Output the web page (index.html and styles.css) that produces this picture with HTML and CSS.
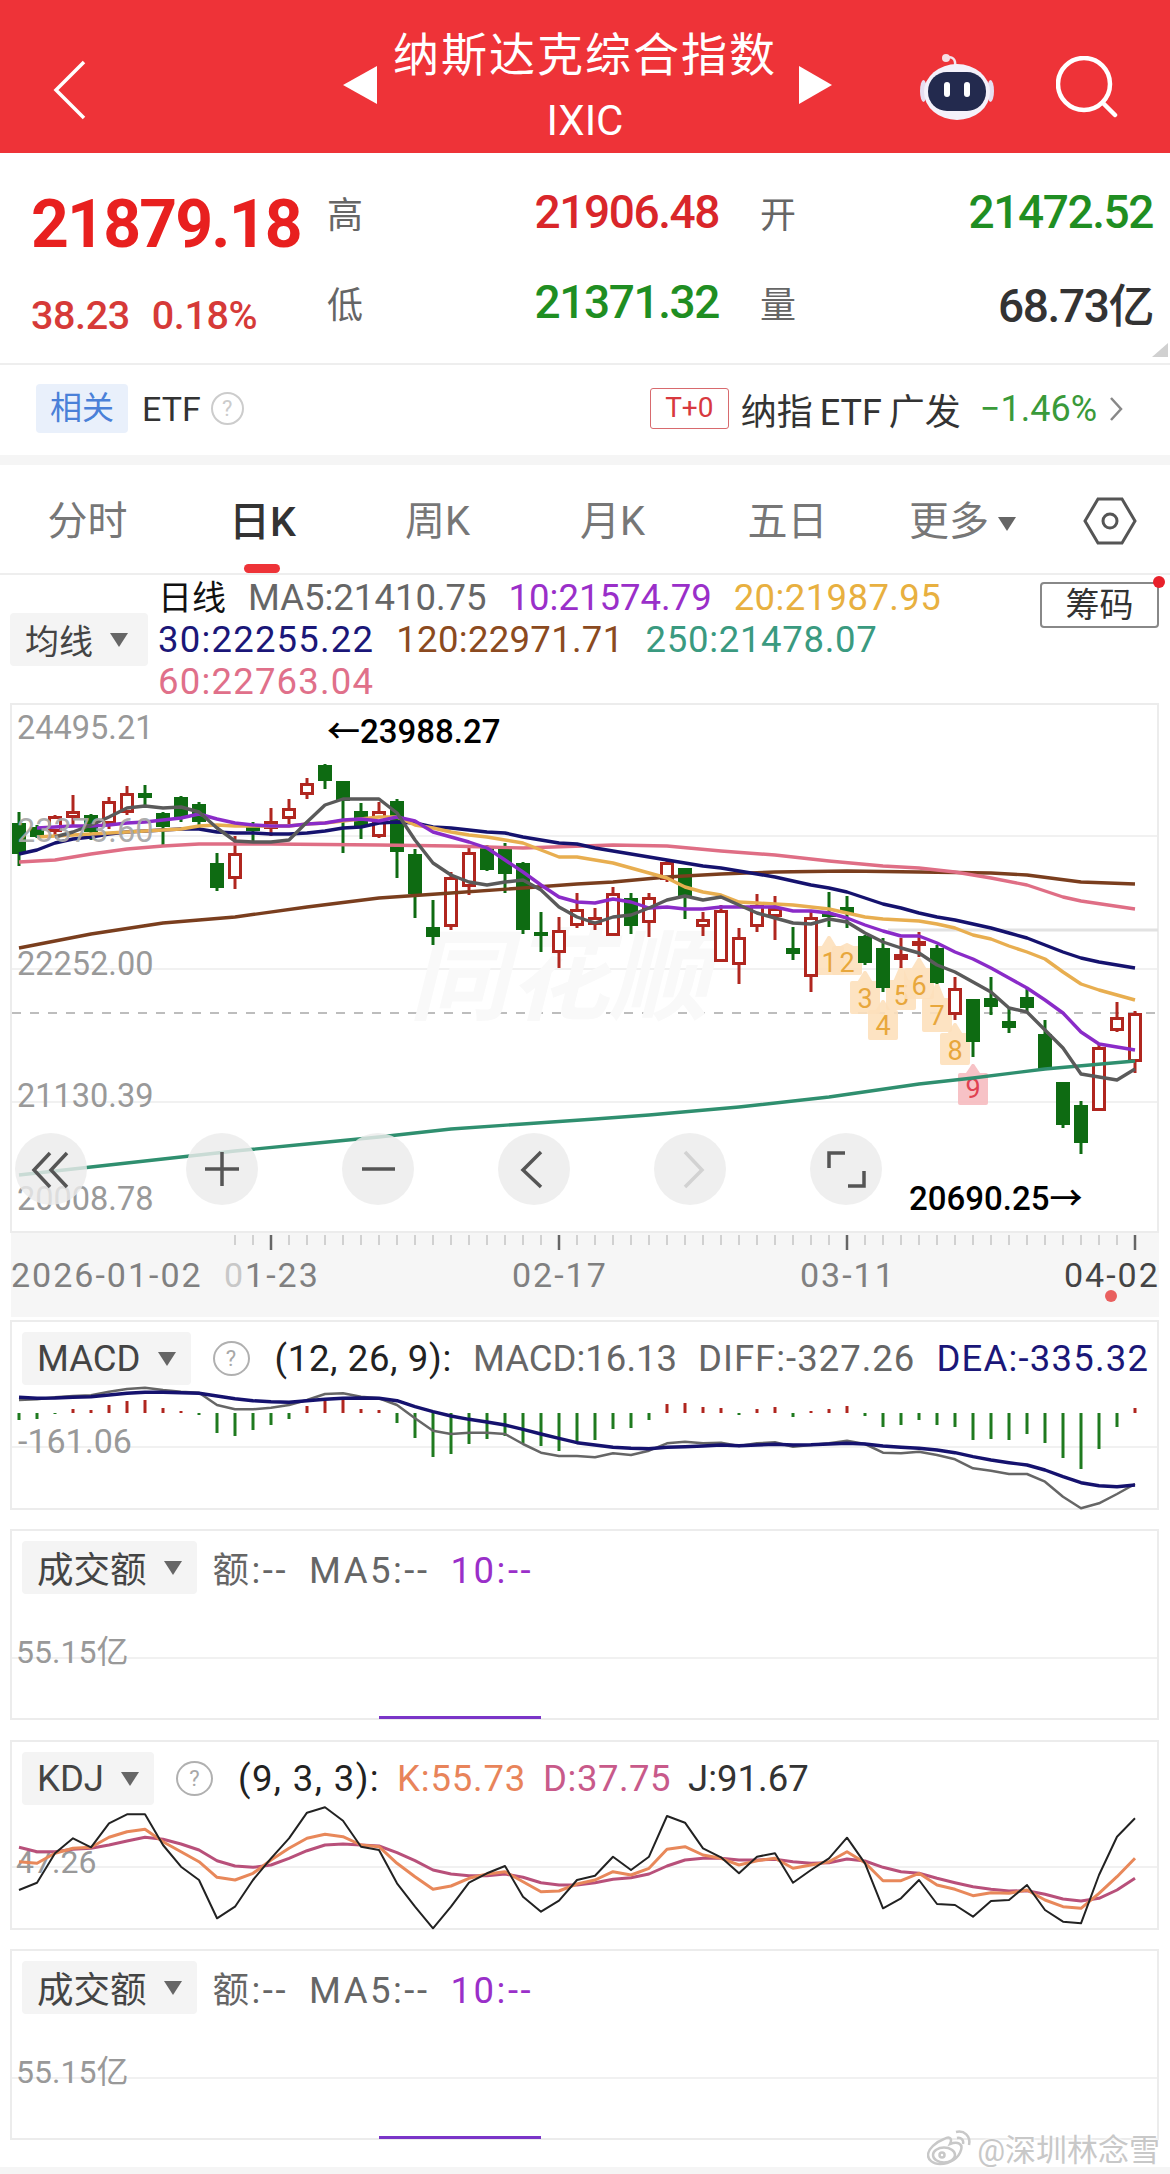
FILE: index.html
```html
<!DOCTYPE html>
<html lang="zh-CN">
<head>
    <meta charset="UTF-8">
    <meta name="viewport" content="width=device-width, initial-scale=1.0">
    <title>纳斯达克综合指数</title>
    <link rel="stylesheet" href="styles.css">
</head>
<body>

<header class="top">
    <div class="top-left">
        <svg width="34" height="60" viewBox="0 0 34 60"><path d="M31 2 L3 30 L31 58" class="back-icon"/></svg>
    </div>
    <div class="title-wrap">
        <span class="nav-arrow prev"></span>
        <div class="title">
            <div class="title-name">纳斯达克综合指数</div>
            <div class="title-code">IXIC</div>
        </div>
        <span class="nav-arrow next"></span>
    </div>
    <div class="top-right">
        <svg width="74" height="68" viewBox="0 0 74 68">
            <path d="M27 5 C32 3 36 6 35 13" fill="none" stroke="#f3e6ee" stroke-width="2.5"/>
            <circle cx="26" cy="5" r="4" fill="#f6dfe4"/>
            <ellipse cx="3.5" cy="38" rx="3.5" ry="11" fill="#e6def0"/>
            <ellipse cx="70.5" cy="38" rx="3.5" ry="11" fill="#e6def0"/>
            <ellipse cx="37" cy="39" rx="33" ry="28" fill="#f4f1fa"/>
            <rect x="8" y="19" width="58" height="39" rx="19" fill="#232a4e"/>
            <rect x="24" y="29" width="6" height="15" rx="3" fill="#fff"/>
            <rect x="44" y="29" width="6" height="15" rx="3" fill="#fff"/>
        </svg>
        <svg width="62" height="62" viewBox="0 0 62 62" class="search-icon">
            <circle cx="28" cy="28" r="26"/>
            <path d="M47 47 L59 59"/>
        </svg>
    </div>
</header>

<section class="quote">
    <div class="price">21879.18</div>
    <div class="q-label">高</div>
    <div class="q-value red">21906.48</div>
    <div class="q-label">开</div>
    <div class="q-value green">21472.52</div>
    <div class="change"><span>38.23</span><span>0.18%</span></div>
    <div class="q-label">低</div>
    <div class="q-value green">21371.32</div>
    <div class="q-label">量</div>
    <div class="q-value dark">68.73亿</div>
    <span class="corner"></span>
</section>

<section class="related">
    <div class="related-left">
        <span class="badge">相关</span>
        <span class="etf">ETF</span>
        <span class="help small">?</span>
    </div>
    <div class="related-right">
        <span class="t0">T+0</span>
        <span class="etf-name">纳指 ETF 广发</span>
        <span class="etf-pct">−1.46%</span>
        <svg width="14" height="26" viewBox="0 0 14 26"><path d="M2 2 L12 13 L2 24" class="row-arrow"/></svg>
    </div>
</section>

<div class="band"></div>

<nav class="tabs">
    <div class="tab">分时</div>
    <div class="tab active"><span>日K</span></div>
    <div class="tab">周K</div>
    <div class="tab">月K</div>
    <div class="tab">五日</div>
    <div class="tab">更多<i class="caret tab-caret"></i></div>
    <div class="tab">
        <svg width="54" height="48" viewBox="0 0 54 48" class="hex-icon">
            <path d="M2 24 L15 2 L39 2 L52 24 L39 46 L15 46 Z"/>
            <circle cx="27" cy="24" r="7"/>
        </svg>
    </div>
</nav>

<section class="ma-head">
    <div class="chip ma-chip">均线<i class="caret"></i></div>
    <div class="ma-lines">
        <div class="ma-line">
            <span class="ma-title">日线</span>
            <span class="c-ma5">MA5:21410.75</span>
            <span class="c-ma10">10:21574.79</span>
            <span class="c-ma20">20:21987.95</span>
        </div>
        <div class="ma-line">
            <span class="c-ma30">30:22255.22</span>
            <span class="c-ma120">120:22971.71</span>
            <span class="c-ma250">250:21478.07</span>
        </div>
        <div class="ma-line">
            <span class="c-ma60">60:22763.04</span>
        </div>
    </div>
    <div class="chips-btn">筹码</div>
</section>

<section class="main-chart">
    <svg class="chart-svg" viewBox="12 705 1146 526" width="1146" height="526">
        <g class="grid">
            <line x1="12" x2="1158" y1="836" y2="836"/>
            <line x1="12" x2="1158" y1="969" y2="969"/>
            <line x1="12" x2="1158" y1="1102" y2="1102"/>
        </g>
        <line x1="888" x2="1158" y1="930" y2="930" class="grid-thick"/>
        <line x1="12" x2="1158" y1="1013" y2="1013" class="grid-dash"/>
        <text x="409" y="1012" class="brand">同花顺</text>
        <g id="plot"></g>
        <g class="y-label">
            <text x="17" y="739">24495.21</text>
            <text x="17" y="842" class="soft">23373.60</text>
            <text x="17" y="975">22252.00</text>
            <text x="17" y="1107">21130.39</text>
            <text x="17" y="1210">20008.78</text>
        </g>
        <text x="327" y="743" class="extreme">←23988.27</text>
        <text x="909" y="1210" class="extreme">20690.25→</text>
    </svg>
    <div class="tools">
        <button class="tool first"><svg width="72" height="72" viewBox="0 0 72 72"><path d="M35 20 L19 37 L35 54 M52 20 L36 37 L52 54"/></svg></button>
        <button class="tool"><svg width="72" height="72" viewBox="0 0 72 72"><path d="M19 36 H53 M36 19 V53"/></svg></button>
        <button class="tool"><svg width="72" height="72" viewBox="0 0 72 72"><path d="M20 36 H53"/></svg></button>
        <button class="tool"><svg width="72" height="72" viewBox="0 0 72 72"><path d="M43 19 L25 37 L43 54"/></svg></button>
        <button class="tool off"><svg width="72" height="72" viewBox="0 0 72 72"><path d="M31 19 L48 37 L31 54"/></svg></button>
        <button class="tool"><svg width="72" height="72" viewBox="0 0 72 72"><path d="M19 35 V20 H35 M54 38 V53 H38"/></svg></button>
    </div>
</section>

<section class="axis">
    <svg class="axis-svg" viewBox="11 1233 1148 84" width="1148" height="84">
        <g id="ticks"></g>
        <g class="axis-label">
            <text x="11" y="1287">2026-01-02</text>
            <text x="224" y="1287"><tspan class="fade">0</tspan>1-23</text>
            <text x="512" y="1287">02-17</text>
            <text x="800" y="1287">03-11</text>
            <text x="1064" y="1287" class="last">04-02</text>
        </g>
        <circle cx="1111" cy="1296" r="6" fill="#e9605f"/>
    </svg>
</section>

<div class="panels">
    <section class="panel macd">
        <svg class="panel-svg" viewBox="10 1320 1149 190" width="1149" height="190">
            <line x1="12" x2="1157" y1="1447" y2="1447" class="grid"/>
            <g id="macd"></g>
            <text x="18" y="1453" class="panel-axis">-161.06</text>
        </svg>
        <div class="panel-head">
            <div class="chip">MACD<i class="caret"></i></div>
            <span class="help">?</span>
            <div class="ind">
                <span class="params sp-macd">(12, 26, 9):</span>
                <span class="c-ma5">MACD:16.13</span>
                <span class="c-ma5 sp-diff">DIFF:-327.26</span>
                <span class="c-ma30 sp-dea">DEA:-335.32</span>
            </div>
        </div>
    </section>

    <section class="panel vol">
        <svg class="panel-svg" viewBox="10 1529 1149 191" width="1149" height="191">
            <line x1="12" x2="1157" y1="1658" y2="1658" class="grid"/>
            <rect x="379" y="1716" width="162" height="3" class="vol-bar"/>
            <text x="16" y="1663" class="panel-axis small">55.15亿</text>
        </svg>
        <div class="panel-head">
            <div class="chip">成交额<i class="caret"></i></div>
            <div class="ind">
                <span class="c-ma5">额:--</span>
                <span class="c-ma5">MA5:--</span>
                <span class="c-ma10">10:--</span>
            </div>
        </div>
    </section>

    <section class="panel kdj">
        <svg class="panel-svg" viewBox="10 1740 1149 190" width="1149" height="190">
            <line x1="12" x2="1157" y1="1867" y2="1867" class="grid"/>
            <text x="16" y="1873" class="panel-axis small">47.26</text>
            <g id="kdj"></g>
        </svg>
        <div class="panel-head">
            <div class="chip">KDJ<i class="caret"></i></div>
            <span class="help">?</span>
            <div class="ind ind-kdj">
                <span class="params sp-kdj">(9, 3, 3):</span>
                <span class="c-k">K:55.73</span>
                <span class="c-d">D:37.75</span>
                <span class="c-j">J:91.67</span>
            </div>
        </div>
    </section>

    <section class="panel vol">
        <svg class="panel-svg" viewBox="10 1949 1149 191" width="1149" height="191">
            <line x1="12" x2="1157" y1="2078" y2="2078" class="grid"/>
            <rect x="379" y="2136" width="162" height="3" class="vol-bar"/>
            <text x="16" y="2083" class="panel-axis small">55.15亿</text>
        </svg>
        <div class="panel-head">
            <div class="chip">成交额<i class="caret"></i></div>
            <div class="ind">
                <span class="c-ma5">额:--</span>
                <span class="c-ma5">MA5:--</span>
                <span class="c-ma10">10:--</span>
            </div>
        </div>
    </section>
</div>

<div class="foot"></div>

<div class="stamp">
    <svg width="46" height="38" viewBox="0 0 46 38" class="stamp-logo">
        <path d="M17 10 C24 6 25 11 23 15 C31 12 36 15 34 21 C32 29 23 35 13 35 C6 35 1 31 1 26 C1 20 9 13 17 10 Z"/>
        <ellipse cx="17" cy="26" rx="11" ry="7.5"/>
        <circle cx="15" cy="26" r="2.5"/>
        <path d="M30 9 C34 8 37 11 36 15 M29 3 C37 1 44 7 42 16"/>
    </svg>
    <span>@深圳林念雪</span>
</div>

<script src="chart.js"></script>

</body>
</html>
```

FILE: styles.css
```css
* {
    box-sizing: border-box;
}
body {
    font-family: Roboto, "Noto Sans CJK SC", sans-serif;
    background-color: #fff;
    margin: 0;
    padding: 0;
    position: relative;
    color: #333;
}

/* top red bar */
.top {
    height: 153px;
    background-color: #ee3338;
    display: grid;
    grid-template-columns: 1fr auto 1fr;
    color: #fff;
}
.top-left {
    padding: 27px 0 0 53px;
    display: flex;
    align-items: center;
}
.back-icon {
    fill: none;
    stroke: #fff;
    stroke-width: 3.5;
}
.title-wrap {
    display: flex;
    align-items: center;
    padding-left: 5px;
}
.nav-arrow {
    width: 0;
    height: 0;
    margin-top: 16px;
    border-top: 19px solid transparent;
    border-bottom: 19px solid transparent;
}
.nav-arrow.prev {
    border-right: 34px solid #fff;
    margin-right: 16px;
}
.nav-arrow.next {
    border-left: 33px solid #fff;
    margin-left: 22px;
}
.title {
    text-align: center;
    padding-top: 22px;
}
.title-name {
    font-size: 46px;
    line-height: 66px;
    letter-spacing: 2px;
}
.title-code {
    font-size: 42px;
    line-height: 65px;
}
.top-right {
    padding: 20px 52px 0 0;
    display: flex;
    align-items: center;
    justify-content: flex-end;
    gap: 62px;
}
.search-icon {
    fill: none;
    stroke: #fff;
    stroke-width: 4.5;
}
.search-icon path {
    stroke-linecap: round;
}

/* quote block */
.quote {
    height: 212px;
    padding: 14px 17px 0 31px;
    display: grid;
    grid-template-columns: 296px 36px 356px 41px 36px 357px;
    grid-template-rows: 90px 90px;
    align-items: center;
    position: relative;
    border-bottom: 2px solid #eee;
}
.price {
    font-size: 66px;
    font-weight: 700;
    color: #e8201f;
    letter-spacing: -1.8px;
    margin-top: 24px;
}
.q-label {
    font-size: 36px;
    color: #666;
}
.q-value {
    font-size: 46px;
    font-weight: 500;
    text-align: right;
    letter-spacing: -1.4px;
}
.q-value.red { color: #d9262a; }
.q-value.green { color: #1f8e22; }
.q-value.dark { color: #333; }
.q-label + .q-value + .q-label {
    grid-column: 5;
}
.change {
    display: flex;
    gap: 22px;
    font-size: 39.5px;
    font-weight: 500;
    letter-spacing: -0.4px;
    color: #d63a38;
    margin-top: 26px;
}
.corner {
    position: absolute;
    right: 2px;
    bottom: 6px;
    width: 0;
    height: 0;
    border-left: 16px solid transparent;
    border-bottom: 14px solid #d0d0d0;
}

/* related etf row */
.related {
    height: 90px;
    padding: 0 47px 3px 36px;
    display: flex;
    justify-content: space-between;
    align-items: center;
}
.related-left, .related-right {
    display: flex;
    align-items: center;
}
.badge {
    width: 92px;
    height: 49px;
    background-color: #e9f0fb;
    border-radius: 4px;
    color: #4a80d8;
    font-size: 32px;
    line-height: 49px;
    text-align: center;
}
.etf {
    font-size: 34px;
    margin-left: 14px;
}
.help {
    display: flex;
    align-items: center;
    justify-content: center;
    width: 37px;
    height: 35px;
    flex: none;
    border: 2px solid #b0b0b0;
    border-radius: 50%;
    font-size: 22px;
    color: #a8a8a8;
    margin-left: 22px;
}
.help.small {
    width: 33px;
    height: 33px;
    margin-left: 10px;
    border-color: #ccc;
    color: #ccc;
}
.t0 {
    width: 79px;
    height: 41px;
    border: 1.5px solid #d86a6e;
    border-radius: 3px;
    color: #d8393f;
    font-size: 28px;
    line-height: 38px;
    text-align: center;
}
.etf-name {
    font-size: 36px;
    word-spacing: -2px;
    margin-left: 12px;
}
.etf-pct {
    font-size: 36px;
    color: #3a9a3a;
    margin-left: 19px;
}
.row-arrow {
    fill: none;
    stroke: #888;
    stroke-width: 2.5;
}
.related-right svg {
    margin-left: 12px;
}
.band {
    height: 10px;
    background-color: #f5f5f5;
}

/* period tabs */
.tabs {
    height: 110px;
    padding-top: 6px;
    display: grid;
    grid-template-columns: repeat(6, 175px) 120px;
    align-items: center;
    border-bottom: 2px solid #eee;
}
.tab {
    font-size: 40px;
    color: #777;
    text-align: center;
    position: relative;
    line-height: 56px;
}
.tab.active {
    color: #333;
    font-weight: 500;
    font-size: 41px;
}
.tab.active::after {
    content: "";
    position: absolute;
    left: 69px;
    top: 70px;
    width: 36px;
    height: 9px;
    background-color: #ee3338;
    border-radius: 5px;
}
.caret {
    display: inline-block;
    width: 0;
    height: 0;
    border-left: 9px solid transparent;
    border-right: 9px solid transparent;
    border-top: 14px solid #666;
    margin-left: 17px;
    vertical-align: middle;
}
.tab-caret {
    margin-left: 9px;
}
.hex-icon {
    fill: none;
    stroke: #555;
    stroke-width: 3;
    display: block;
    margin: -3px auto 0;
}

/* moving average legend */
.ma-head {
    height: 128px;
    padding-left: 10px;
    display: flex;
    position: relative;
}
.chip {
    display: flex;
    align-items: center;
    height: 53px;
    padding: 0 15px;
    background-color: #f4f4f4;
    border-radius: 4px;
    font-size: 36.5px;
    color: #444;
    white-space: nowrap;
    flex: none;
}
.ma-chip {
    margin-top: 38px;
    width: 138px;
    font-size: 34px;
}
.ma-lines {
    margin: 2px 0 0 10px;
    flex: 1;
    font-size: 36.5px;
    line-height: 42px;
}
.ma-line {
    display: flex;
    align-items: baseline;
    gap: 22px;
}
.ma-line .c-ma20 { letter-spacing: 0.4px; }
.ma-line .c-ma30, .ma-line .c-ma60 { letter-spacing: 1.2px; }
.ma-line .c-ma120 { letter-spacing: 0.3px; }
.ma-line .c-ma250 { letter-spacing: 0.7px; }
.ma-title {
    color: #111;
    font-size: 34px;
}
.c-ma5 { color: #666; }
.c-ma10 { color: #9a2fc9; }
.c-ma20 { color: #e8b040; }
.c-ma30 { color: #1b1778; }
.c-ma120 { color: #8b4a20; }
.c-ma250 { color: #3a9a80; }
.c-ma60 { color: #e0708a; }
.c-k { color: #e8845a; letter-spacing: 0.8px; }
.c-d { color: #c85a8a; letter-spacing: 0.5px; }
.c-j { color: #333; }
.chips-btn {
    position: absolute;
    right: 11px;
    top: 7px;
    width: 119px;
    height: 46px;
    border: 2px solid #888;
    border-radius: 4px;
    font-size: 34px;
    line-height: 42px;
    text-align: center;
    background-color: #fff;
}
.chips-btn::after {
    content: "";
    position: absolute;
    right: -8px;
    top: -8px;
    width: 12px;
    height: 12px;
    border-radius: 50%;
    background-color: #e8202a;
}

/* main candle chart */
.main-chart {
    position: relative;
    height: 530px;
    margin: 0 11px 0 10px;
    border: 2px solid #ececec;
}
.chart-svg, .axis-svg {
    display: block;
}
.grid line, line.grid {
    stroke: #ececec;
    stroke-width: 1.5;
}
.grid-thick {
    stroke: #e2e2e2;
    stroke-width: 3;
}
.grid-dash {
    stroke: #a8a8a8;
    stroke-width: 1.5;
    stroke-dasharray: 9 9;
}
.brand {
    font-size: 100px;
    font-weight: 700;
    font-style: italic;
    fill: #f9f9f9;
}
.y-label text {
    font-size: 32.5px;
    fill: #999;
}
.y-label .soft {
    fill: #a8a8a8;
    fill-opacity: 0.95;
}
.extreme {
    font-size: 33px;
    font-weight: 500;
    fill: #000;
}
.wick-up { stroke: #b0261f; stroke-width: 3; }
.wick-down { stroke: #0e6b12; stroke-width: 3; }
.body-up { fill: #fff; stroke: #b0261f; stroke-width: 3; }
.body-down { fill: #0e6b12; }
.tag {
    fill: #fde0bc;
    stroke: #fde0bc;
    stroke-width: 4;
    stroke-linejoin: round;
    opacity: 0.9;
}
.tag-last {
    fill: #f7bcc0;
    stroke: #f7bcc0;
}
.tag-num {
    font-size: 27px;
    fill: #e8a73c;
    text-anchor: middle;
}
.tag-num.last { fill: #e04050; }
polyline {
    fill: none;
    stroke-width: 3.4;
    stroke-linejoin: round;
}
.l-ma5 { stroke: #5a5a5a; }
.l-ma10 { stroke: #8a2bc8; }
.l-ma20 { stroke: #e8ae50; }
.l-ma30 { stroke: #15126e; }
.l-ma60 { stroke: #df6e85; }
.l-ma120 { stroke: #7a3e1e; }
.l-ma250 { stroke: #2f8f6f; }
.tools {
    position: absolute;
    left: 3px;
    top: 428px;
    display: flex;
    gap: 84px;
}
.tool {
    width: 72px;
    height: 72px;
    padding: 0;
    border: none;
    border-radius: 50%;
    background-color: rgba(236, 236, 236, 0.82);
}
.tool.first {
    margin-right: 15px;
}
.tool svg {
    display: block;
    fill: none;
    stroke: #555;
    stroke-width: 3.5;
}
.tool.off svg {
    stroke: #d2d2d2;
}

/* date axis */
.axis {
    height: 84px;
    margin: 0 11px;
    background-color: #f6f6f6;
}
.tick { stroke: #c4c4c4; stroke-width: 1.5; }
.tick.major { stroke: #666; stroke-width: 2.5; }
.axis-label text {
    font-size: 34px;
    letter-spacing: 2px;
    fill: #808080;
}
.axis-label .last {
    fill: #444;
}
.axis-label .fade {
    fill: #c8c8c8;
}

/* indicator panels */
.panels {
    padding: 3px 11px 0 10px;
    display: flex;
    flex-direction: column;
    gap: 19px;
}
.panel {
    position: relative;
    height: 190px;
    border: 2px solid #ececec;
}
.panel.vol {
    height: 191px;
}
.panel.kdj {
    margin-top: 1px;
}
.panel-svg {
    position: absolute;
    left: -2px;
    top: -2px;
}
.panel-head {
    position: relative;
    display: flex;
    align-items: center;
    padding: 10px 0 0 10px;
}
.ind {
    display: flex;
    align-items: baseline;
    gap: 21px;
    font-size: 36.5px;
    margin-left: 16px;
    white-space: nowrap;
}
.vol .ind span {
    letter-spacing: 2.5px;
}
.help + .ind {
    margin-left: 25px;
}
.help + .ind-kdj {
    gap: 17px;
}
.params {
    color: #222;
}
.sp-macd { letter-spacing: 0.7px; }
.sp-diff { letter-spacing: 1px; }
.sp-dea { letter-spacing: 1.2px; }
.sp-kdj { letter-spacing: 1.4px; }
.panel-axis {
    font-size: 34px;
    fill: #999;
}
.panel-axis.small {
    font-size: 32px;
}
.vol-bar {
    fill: #7a35c8;
}
polyline.l-diff { stroke: #666; stroke-width: 2.5; }
polyline.l-dea { stroke: #15126e; }
polyline.l-j { stroke: #222; stroke-width: 2; }
polyline.l-k { stroke: #e8885a; stroke-width: 3; }
polyline.l-d { stroke: #b8507a; stroke-width: 3; }
.hist { stroke-width: 3; }
.hist.up { stroke: #b0261f; }
.hist.down { stroke: #1f7a1f; }

.foot {
    height: 7px;
    margin-top: 27px;
    background-color: #f5f5f5;
}

/* repost stamp */
.stamp {
    position: absolute;
    right: 10px;
    top: 2125px;
    display: flex;
    align-items: center;
    gap: 4px;
    font-size: 31px;
    color: #c8c8c8;
    text-shadow: 0 0 3px #fff, 0 0 3px #fff;
}
.stamp-logo {
    fill: none;
    stroke: #c8c8c8;
    stroke-width: 2.5;
}
```

FILE: chart.js
```js
// x of candle number i, same spacing in all the panels
const xOf = i => 19 + 18 * i;

// [high, body top, body bottom, low, 1 = up]
const candles = [
    [812,823,854,866,0],[825,827,837,838,0],[815,816,832,835,1],[795,811,818,825,1],[814,815,832,840,0],
    [797,801,824,829,1],[786,793,813,815,1],[785,793,798,808,0],[812,813,827,845,0],[796,797,818,822,0],
    [802,804,822,828,0],[853,863,888,891,0],[836,853,879,889,1],[822,827,831,842,0],[808,821,829,836,1],
    [799,808,819,824,1],[778,783,795,799,1],[764,765,781,789,0],[781,781,801,853,0],[803,811,826,839,0],
    [802,811,837,838,1],[799,801,852,878,0],[849,854,894,918,0],[900,927,937,945,0],[872,877,927,930,1],
    [845,852,887,895,1],[845,848,870,871,0],[843,848,874,893,0],[862,863,930,934,0],[912,932,936,952,0],
    [917,930,953,968,1],[893,909,926,928,1],[908,917,925,930,1],[887,893,936,936,1],[893,898,926,934,0],
    [893,897,923,937,1],[860,862,880,882,1],[868,868,896,919,0],[912,919,927,936,1],[905,910,962,962,1],
    [928,937,965,984,1],[894,905,927,932,1],[896,908,917,940,1],[927,948,954,960,0],[912,917,977,992,1],
    [892,913,917,927,0],[896,907,913,928,0],[935,936,963,965,0],[938,948,988,992,0],[938,954,960,968,1],
    [932,941,946,957,1],[945,948,983,984,0],[977,988,1015,1020,1],[999,999,1042,1057,0],[977,998,1007,1015,0],
    [1008,1021,1028,1033,0],[988,997,1008,1012,0],[1020,1034,1069,1069,0],[1082,1082,1125,1128,0],[1101,1105,1143,1154,0],
    [1043,1047,1111,1111,1],[1002,1017,1031,1032,1],[1011,1013,1062,1073,1]
];

const ma5 = [837,832,825,817,808,806,808,807,812,828,841,842,842,840,822,805,799,799,799,813,840,863,875,882,885,882,880,890,907,917,
    923,917,915,908,900,896,900,897,905,913,918,923,924,919,922,933,942,948,953,965,972,982,992,1008,1012,1030,1048,1074,1077,1080,1069];
const ma10 = [828,827,826,826,825,823,822,820,818,814,819,823,825,826,826,824,823,820,819,821,817,821,832,837,842,848,860,872,885,897,902,
    903,899,902,908,907,909,909,907,907,907,907,911,911,913,918,925,931,936,936,943,952,959,968,978,988,1000,1013,1032,1044,1047,1050];
const ma20 = [837,836,835,834,833,832,831,830,829,826,825,826,826,826,826,824,823,821,819,817,817,825,828,832,835,837,840,843,850,857,857,
    860,863,868,873,878,887,892,895,902,903,904,905,907,909,913,917,919,920,921,924,928,935,939,946,952,959,972,984,990,995,1000];
const ma30 = [854,850,843,839,837,834,832,831,830,829,829,832,833,833,834,834,833,831,828,827,823,822,823,827,828,830,832,833,837,840,843,
    844,848,851,854,857,860,863,866,868,871,874,877,881,885,888,892,898,904,908,913,917,920,924,928,933,938,945,952,958,962,965,968];
const ma60 = [[0,862],[2,860],[4,854],[6,849],[8,846],[10,844],[14,844],[20,845],[24,846],[26,847],[28,848],[33,845],[36,846],[39,851],
    [42,855],[45,861],[48,866],[50,868],[52,872],[54,878],[56,885],[58,897],[59,901],[62,909]];
const ma120 = [[0,948],[4,934],[8,923],[12,917],[16,907],[20,898],[24,893],[28,888],[31,884],[33,882],[36,877],[39,874],[42,872],[46,871],
    [50,872],[54,873],[56,875],[59,882],[62,884]];
const ma250 = [[0,1175],[4,1167],[8,1159],[12,1151],[16,1144],[20,1137],[24,1129],[28,1124],[32,1119],[35,1115],[40,1107],[45,1097],
    [50,1084],[53,1078],[57,1069],[62,1061]];

// nine-turn tags: candle index, tip, rect top, rect bottom, text baseline
const tags = [
    [45,938,948,973,972],[46,945,948,973,972],[47,973,983,1012,1008],[48,1002,1012,1038,1035],[49,968,982,1008,1005],
    [50,960,970,997,995],[51,985,1000,1030,1025],[52,1025,1035,1063,1060],[53,1066,1075,1103,1098]
];

// macd bars in px from the zero line, up is positive
const hist = [-7,-6,-1,4,3,8,12,13,5,2,-2,-20,-23,-17,-12,-6,7,12,13,4,3,-10,-25,-44,-41,-31,-26,-23,-30,-33,-38,-30,-27,-16,-15,-7,
    9,10,6,5,-2,4,6,-4,2,4,7,-3,-14,-12,-7,-12,-14,-27,-26,-27,-21,-30,-45,-56,-36,-14,5];

// the lower lines were read off in thirds of a pixel
const diff = [270,268,262,258,256,245,237,233,240,245,248,285,298,298,293,285,270,252,250,260,265,285,325,362,372,368,368,372,402,428,438,438,442,430,435,422,
    400,395,400,398,408,400,397,410,405,400,392,402,428,430,425,435,448,475,482,492,492,515,560,595,580,552,522];
const dea = [262,265,264,262,260,255,250,247,247,248,250,258,266,272,275,277,272,268,265,264,265,272,290,305,318,328,336,345,358,372,385,398,405,412,415,416,
    412,410,408,405,407,405,403,405,404,402,400,402,408,412,415,420,428,440,450,458,465,480,500,518,527,530,525];
const kdjJ = [480,458,370,325,352,280,253,253,345,410,450,565,530,450,385,325,248,232,272,350,360,460,530,595,530,458,430,408,500,545,512,450,437,380,420,380,
    258,278,355,382,430,380,370,458,420,385,323,400,535,505,450,522,525,560,513,510,465,540,575,580,435,320,265];
const kdjK = [395,400,370,355,352,322,305,298,335,365,395,442,450,430,390,355,325,313,320,345,350,400,440,478,468,445,432,425,455,485,483,462,450,425,435,415,
    358,350,375,385,405,392,385,415,405,395,365,398,452,452,430,465,478,497,488,490,480,510,530,535,490,440,385];
const kdjD = [352,365,365,358,355,345,333,322,328,342,360,392,408,412,405,385,362,345,342,345,348,368,392,420,432,437,437,432,442,458,465,465,458,448,443,432,
    408,390,385,385,390,390,388,395,400,398,387,393,412,425,430,445,458,470,478,483,482,493,507,513,505,480,445];

function polyline(points, cls) {
    const p = points.map(([x, y]) => x.toFixed(1) + "," + y.toFixed(1)).join(" ");
    return `<polyline class="${cls}" points="${p}"/>`;
}

// dense array starting at candle `start`
function series(arr, start) {
    return arr.map((y, i) => [xOf(start + i), y]);
}

function sparse(arr) {
    return arr.map(([i, y]) => [xOf(i), y]);
}

function drawCandle(c, i) {
    const [hi, top, bot, lo, up] = c;
    const x = xOf(i);
    const wick = `<line class="wick-${up ? "up" : "down"}" x1="${x}" x2="${x}" y1="${hi}" y2="${lo}"/>`;
    if (up) {
        // outline sits inside the 14px body width
        const h = Math.max(bot - top - 3, 2);
        return wick + `<rect class="body-up" x="${x - 5.5}" y="${top + 1.5}" width="11" height="${h}"/>`;
    }
    return wick + `<rect class="body-down" x="${x - 7}" y="${top}" width="14" height="${Math.max(bot - top, 3)}"/>`;
}

function drawTag(t, n) {
    const [i, tip, top, bot, base] = t;
    const x = xOf(i);
    const last = n === tags.length - 1 ? " last" : "";
    return `<path class="tag${last ? " tag-last" : ""}" d="M${x - 13} ${top} H${x - 6} L${x} ${tip} L${x + 6} ${top} H${x + 13} V${bot} H${x - 13} Z"/>` +
        `<text class="tag-num${last}" x="${x}" y="${base}">${n + 1}</text>`;
}

document.addEventListener("DOMContentLoaded", () => {
    document.getElementById("plot").innerHTML =
        tags.map(drawTag).join("") +
        candles.map(drawCandle).join("") +
        polyline(sparse(ma250), "l-ma250") +
        polyline(sparse(ma120), "l-ma120") +
        polyline(sparse(ma60), "l-ma60") +
        polyline(series(ma30, 0), "l-ma30") +
        polyline(series(ma20, 1), "l-ma20") +
        polyline(series(ma10, 1), "l-ma10") +
        polyline(series(ma5, 2), "l-ma5");

    let ticks = "";
    for (let i = 12; i <= 62; i++) {
        const major = i % 16 === 14;
        const y2 = major ? 1250 : 1245;
        ticks += `<line class="tick${major ? " major" : ""}" x1="${xOf(i)}" x2="${xOf(i)}" y1="1235" y2="${y2}"/>`;
    }
    document.getElementById("ticks").innerHTML = ticks;

    const toY = (base, v) => base + v / 3;
    const bars = hist.map((h, i) => {
        const cls = h > 0 ? "up" : "down";
        return `<line class="hist ${cls}" x1="${xOf(i)}" x2="${xOf(i)}" y1="1413" y2="${1413 - h}"/>`;
    }).join("");
    document.getElementById("macd").innerHTML = bars +
        polyline(series(diff.map(v => toY(1310, v)), 0), "l-diff") +
        polyline(series(dea.map(v => toY(1310, v)), 0), "l-dea");

    document.getElementById("kdj").innerHTML =
        polyline(series(kdjD.map(v => toY(1730, v)), 0), "l-d") +
        polyline(series(kdjK.map(v => toY(1730, v)), 0), "l-k") +
        polyline(series(kdjJ.map(v => toY(1730, v)), 0), "l-j");
});
```
